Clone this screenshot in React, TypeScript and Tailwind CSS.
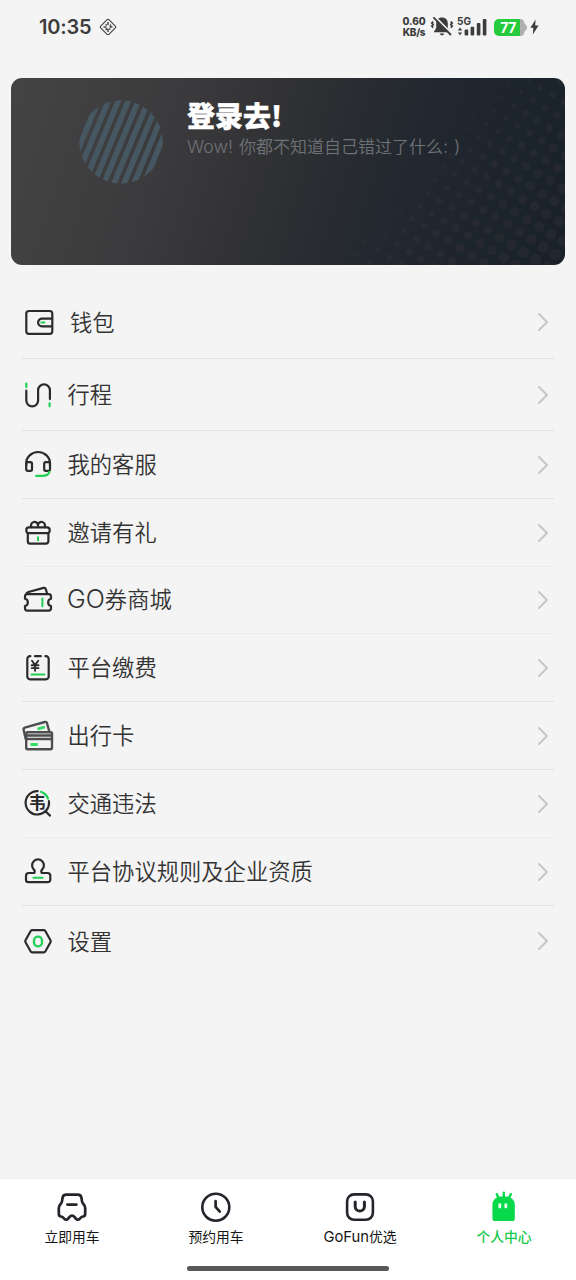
import React from 'react';
import { ChevronRight } from 'lucide-react';

const GREEN = '#1fd053';
const INK = '#2b2b2d';

const Icon: React.FC<{ children: React.ReactNode; stroke?: string; width?: number }> = ({
  children,
  stroke = INK,
  width = 2.2,
}) => (
  <svg
    viewBox="0 0 32 32"
    className="w-8 h-8 flex-shrink-0"
    fill="none"
    stroke={stroke}
    strokeWidth={width}
    strokeLinecap="round"
    strokeLinejoin="round"
  >
    {children}
  </svg>
);

const WalletIcon = () => (
  <Icon>
    <rect x="4.3" y="5" width="26" height="22.8" rx="2.6" />
    <path d="M30 12.6H20a3.9 3.9 0 0 0 0 7.8h10" />
    <path d="M19.3 16.5h3.2" stroke={GREEN} strokeWidth="1.8" />
  </Icon>
);

const RouteIcon = () => (
  <Icon>
    <path d="M4.3 11.5v10a5.9 5.9 0 0 0 11.8 0V11.3a5.9 5.9 0 0 1 11.8 0v8.800" />
    <path d="M4.3 4.6v3.4M27.6 24.3v3" stroke={GREEN} />
  </Icon>
);

const HeadsetIcon = () => (
  <Icon>
    <path d="M4.2 16.600v-2.200a11.900 11.400 0 0 1 23.800 0v2.200" />
    <rect x="4.2" y="13.2" width="5.8" height="8.6" rx="1.6" />
    <rect x="22.2" y="13.2" width="5.8" height="8.6" rx="1.6" />
    <path d="M27.4 22.800c-.6 2.6-3.600 4.100-7.400 4.100h-5.800" stroke={GREEN} />
  </Icon>
);

const GiftIcon = () => (
  <Icon>
    <path d="M9.400 10a3.500 3.500 0 1 1 6.600-1.600v1.800M22.600 10A3.500 3.500 0 1 0 16 8.400v1.800" />
    <rect x="4.300" y="10.300" width="23.400" height="5.900" rx="2.600" />
    <path d="M5.800 16.400v7.800a2.400 2.400 0 0 0 2.400 2.400H24a2.400 2.400 0 0 0 2.400-2.400v-7.800" />
    <path d="M16 20.200v3" stroke={GREEN} strokeWidth="2" />
  </Icon>
);

const TicketIcon = () => (
  <Icon>
    <path d="M5.300 10.200h21.400a2.400 2.400 0 0 1 2.300 2.400v2.200a3.700 3.700 0 0 0 0 7.200v2.200a2.400 2.400 0 0 1-2.300 2.400H5.300A2.400 2.400 0 0 1 3 24.200V22a3.700 3.700 0 0 0 0-7.200v-2.200a2.400 2.400 0 0 1 2.300-2.400Z" />
    <path d="M4.500 9.400l2-1.400L21.600 3.900a1.800 1.800 0 0 1 2.200 1.200l1.200 4.200" />
    <path d="M20.400 14.600v7.600" stroke={GREEN} strokeWidth="2" />
  </Icon>
);

const BillIcon = () => (
  <Icon>
    <path d="M8.400 4.200H8a2.700 2.700 0 0 0-2.700 2.700v17.700A2.700 2.700 0 0 0 8 27.300h16a2.700 2.700 0 0 0 2.700-2.700V6.900A2.700 2.700 0 0 0 24 4.200h-.600M13 4.200h5.800" />
    <path d="M10 8.800l3.100 4.300 3.100-4.300M13.100 13.100v5.700M9.700 13.200h6.800M9.700 16.100h6.800" strokeWidth="1.900" />
    <path d="M9.400 22.500h13" stroke={GREEN} strokeWidth="1.900" />
  </Icon>
);

const CardsIcon = () => (
  <Icon stroke="#4c4f4d" width={2.4}>
    <path d="M3.700 19L1.600 9.600a1.600 1.600 0 0 1 1.100-1.900L22.800 2a1.800 1.800 0 0 1 2.200 1.200l2.300 8.300" />
    <rect x="4.200" y="12.200" width="25.800" height="17" rx="1.400" />
    <path d="M4.200 15.500h25.800M4.200 19h25.800" strokeWidth="2.300" />
    <path d="M8.400 24.400h7.400M15.600 9.200l7.200-2.400" stroke="#35dc66" strokeWidth="3" strokeLinecap="butt" />
  </Icon>
);

const ViolationIcon = () => (
  <Icon>
    <path d="M15.600 3.100A11.700 11.700 0 1 0 26.900 13.100M24 23.700l4 3.900" />
    <path d="M19 3.800a12 12 0 0 1 7 6.800" stroke={GREEN} />
    <text
      x="15.200"
      y="20.800"
      textAnchor="middle"
      fontSize="17"
      fontWeight="700"
      fill={INK}
      stroke="none"
      fontFamily="'Noto Sans CJK SC', sans-serif"
    >
      韦
    </text>
  </Icon>
);

const StampIcon = () => (
  <Icon>
    <path d="M12.200 17c.900-1.300 .800-2.200-.300-3.400a5.900 5.900 0 1 1 8.200 0c-1.100 1.200-1.200 2.100-.3 3.400h5.800a2.700 2.700 0 0 1 2.700 2.700v4.100a2.400 2.400 0 0 1-2.400 2.400H6.400A2.400 2.400 0 0 1 4 23.800v-4.100A2.700 2.700 0 0 1 6.700 17Z" />
    <path d="M11.400 21.800h9.200" stroke={GREEN} strokeWidth="1.900" />
  </Icon>
);

const SettingsIcon = () => (
  <Icon>
    <path d="M10.200 5.200h11.600a1.800 1.800 0 0 1 1.500 .800l5.200 9.300a2 2 0 0 1 0 1.900l-5.200 9.300a1.800 1.800 0 0 1-1.500 .900H10.200a1.800 1.800 0 0 1-1.500-.900L3.500 17.200a2 2 0 0 1 0-1.900L8.700 6a1.800 1.800 0 0 1 1.500-.800Z" />
    <rect x="12" y="11.600" width="8" height="9.800" rx="3.900" stroke={GREEN} strokeWidth="2.300" />
  </Icon>
);

const menuItems = [
  { icon: WalletIcon, label: '钱包', row: 'h-[73px] border-[#e2e2e2]', text: 'ml-4' },
  { icon: RouteIcon, label: '行程', row: 'h-[72px] border-[#e2e2e2]', text: 'ml-[13.5px]' },
  { icon: HeadsetIcon, label: '我的客服', row: 'h-[68px] border-[#e2e2e2]', text: 'ml-[13.5px]' },
  { icon: GiftIcon, label: '邀请有礼', row: 'h-[68px] border-[#ededed]', text: 'ml-[13.5px]' },
  { icon: TicketIcon, latin: 'GO', label: '券商城', row: 'h-[67px] border-[#ededed]', text: 'ml-[13px]' },
  { icon: BillIcon, label: '平台缴费', row: 'h-[68px] border-[#e2e2e2]', text: 'ml-[13.5px]' },
  { icon: CardsIcon, label: '出行卡', row: 'h-[68px] border-[#e2e2e2]', text: 'ml-[13.5px]' },
  { icon: ViolationIcon, label: '交通违法', row: 'h-[68px] border-[#ededed]', text: 'ml-[13.5px]' },
  { icon: StampIcon, label: '平台协议规则及企业资质', row: 'h-[68px] border-[#e2e2e2]', text: 'ml-[13.5px]' },
  { icon: SettingsIcon, label: '设置', row: 'h-[71px] border-transparent', text: 'ml-[13.5px]' },
];

const CarTab = () => (
  <Icon width={2.7} stroke="#23252b">
    <path d="M10.400 3.700H21.600C23.800 3.700 25.200 5 25.500 7L26 10.400C26.200 11.600 26.600 12.200 27.400 13C28.600 14.300 29.200 15.400 29.200 17V23C29.200 24.600 28.400 25.300 26.900 25.500C25.600 25.700 25 26.200 24.200 27.300C23 29 21 29.200 19.800 27.600L18.400 25.800C17 24.200 15 24.200 13.600 25.800L12.200 27.600C11 29.200 9 29 7.800 27.300C7 26.200 6.400 25.700 5.100 25.500C3.600 25.300 2.800 24.600 2.800 23V17C2.800 15.400 3.400 14.300 4.600 13C5.400 12.200 5.800 11.600 6 10.400L6.500 7C6.800 5 8.200 3.700 10.400 3.700Z" />
    <path d="M11.400 13.600h9" />
  </Icon>
);

const ClockTab = () => (
  <Icon width={2.6} stroke="#23252b">
    <circle cx="15.800" cy="16.200" r="13.500" />
    <path d="M15.600 10.200v5.600l4.200 4.800" strokeWidth="2.700" />
  </Icon>
);

const ShopTab = () => (
  <Icon width={2.6} stroke="#23252b">
    <rect x="3.100" y="3.400" width="25.800" height="25.400" rx="7" />
    <path d="M11.200 11v4.400a4.600 4.600 0 0 0 9.200 0V11" strokeWidth="3" />
  </Icon>
);

const MeTab = () => (
  <Icon width={2} stroke="#07d94b">
    <path
      d="M4.400 13.600a8 8 0 0 1 8-8h6.400a8 8 0 0 1 8 8v13.800a2.600 2.600 0 0 1-2.600 2.600H7a2.600 2.600 0 0 1-2.600-2.600Z"
      fill="#07d94b"
      stroke="none"
    />
    <path d="M8.800 3.200l1.800 3.800M15.800 1.600V7M22.800 3.200l-1.800 3.800" strokeWidth="2.400" />
    <path d="M11.800 13.600v2.400M17.800 13.600v2.400" stroke="#eafff0" strokeWidth="2.800" />
  </Icon>
);

const tabs = [
  { icon: CarTab, label: '立即用车', active: false },
  { icon: ClockTab, label: '预约用车', active: false },
  { icon: ShopTab, latin: 'GoFun', label: '优选', active: false },
  { icon: MeTab, label: '个人中心', active: true },
];

// Halftone dots, growing towards the bottom right corner of the card
const dots: { x: number; y: number; r: number }[] = [];
for (let i = -30; i <= 30; i++) {
  for (let j = -30; j <= 30; j++) {
    const x = 499.7 - 7.7 * i + 12 * j;
    const y = 113.7 + 12.8 * i + 7.4 * j;
    const d = 3 * ((x - 289) * 0.72 + (y + 8) * 0.69) - 440;
    if (x < 0 || x > 562 || y < -6 || y > 194 || d <= 10) continue;
    dots.push({ x, y, r: 5.8 * Math.sqrt(Math.min(d / 460, 1)) });
  }
}

const CardArt = () => (
  <svg viewBox="0 0 554 187" className="absolute inset-0 w-full h-full">
    <g fill="#3a3638" fillOpacity="0.3">
      {dots.map((dot, i) => (
        <circle key={i} cx={dot.x} cy={dot.y} r={dot.r} />
      ))}
    </g>
  </svg>
);

const Avatar = () => (
  <svg viewBox="0 0 84 84" className="w-[84px] h-[84px] flex-shrink-0">
    <clipPath id="avatar">
      <circle cx="42" cy="42" r="41.8" />
    </clipPath>
    <g clipPath="url(#avatar)" stroke="#465761" strokeWidth="5.7">
      {[-5, -4, -3, -2, -1, 0, 1, 2, 3, 4, 5].map((n) => (
        <path key={n} d={`M${60.5 + n * 10} -2L${24 + n * 10} 86`} />
      ))}
    </g>
  </svg>
);

const StatusBar = () => (
  <div className="h-[54px] flex items-center pl-[39px] pr-9 text-[#3c3c3c] font-['Inter','Liberation_Sans',sans-serif]">
    <span className="text-[20px] leading-none font-semibold tracking-[-0.2px]">10:35</span>
    <svg viewBox="0 0 18 18" className="w-[18px] h-[18px] ml-2" fill="none" stroke="#4a4a4a" strokeWidth="1.2">
      <rect x="3.200" y="3.200" width="11.600" height="11.600" rx="1.600" transform="rotate(45 9 9)" />
      <path d="M9 4v3M9 11v3M4.500 9h3M10.500 9h3M6.500 6.500l1.500 1M11.500 6.500v2M6.500 11.500l2-1M11.500 11.500l-1.500-1" strokeWidth="1.500" />
    </svg>

    <div className="ml-auto flex items-center">
      <div className="w-6 text-[10px] leading-[11.5px] font-extrabold text-center whitespace-nowrap">
        <div className="tracking-[-0.1px]">0.60</div>
        <div className="tracking-[-0.3px]">KB/s</div>
      </div>
      <svg viewBox="0 0 24 22" className="w-6 h-[22px] ml-1" fill="none">
        <path d="M12 1.600c-3.800 0-5.800 2.600-5.800 5.800v4.600l-2.600 4.200h16.800l-2.600-4.200V7.400c0-3.200-2-5.800-5.800-5.800ZM9.800 17.600h4.400a2.200 1.800 0 0 1-4.400 0Z" fill="#3c3c3c" />
        <path d="M4.600 0.400l17.600 17.800" stroke="#f4f4f4" strokeWidth="2" />
        <path d="M3.400 1.400L21 19" stroke="#3c3c3c" strokeWidth="1.800" />
        <path d="M3.200 5.600l-1.400 1.500 1.400 1.500-1.400 1.500 1.400 1.500M20.800 5.600l1.400 1.500-1.400 1.500 1.400 1.500-1.400 1.500" stroke="#3c3c3c" strokeWidth="1.700" />
      </svg>
      <svg viewBox="0 -4 30 24" className="w-[30px] h-6 -mt-1 ml-[3px] overflow-visible" fill="#3c3c3c">
        <text
          x="0"
          y="8"
          fontSize="10.800"
          fontWeight="700"
          textLength="14"
          lengthAdjust="spacingAndGlyphs"
          fontFamily="Inter, sans-serif"
        >
          5G
        </text>
        <path d="M0.800 13.400l2.200-2.800 2.200 2.800ZM0.800 15.400h4.400l-2.200 2.800Z" />
        <rect x="7.600" y="12.600" width="3.600" height="6" rx="1" />
        <rect x="13.600" y="9.800" width="3.600" height="8.800" rx="1" />
        <rect x="19.800" y="6" width="3.600" height="12.600" rx="1" />
        <rect x="25.800" y="2" width="3.600" height="16.600" rx="1" />
      </svg>
      <div className="ml-[7px] flex items-center">
        <div className="w-[26px] h-[17px] rounded-l-[5px] bg-[#25cb3c] text-white text-[14px] tracking-[-0.5px] font-bold leading-[17px] text-center pl-0.5">
          77
        </div>
        <svg viewBox="0 0 7 17" className="w-[7px] h-[17px]">
          <path d="M0 0h.500c2 0 3 .800 3.500 2.500l.800 2.500C6.500 6 7 7 7 8.500S6.500 11 4.800 12L4 14.500C3.500 16.200 2.500 17 .500 17H0Z" fill="#aeb0ae" />
        </svg>
      </div>
      <svg viewBox="0 0 9 16" className="w-[9px] h-4 ml-[3px] mr-px" fill="#3c3c3c">
        <path d="M5.600 0.600L0.400 8.800h3L2.800 15.400 8.600 6.600H5.200Z" />
      </svg>
    </div>
  </div>
);

export default function App() {
  return (
    <div className="w-[576px] h-[1280px] flex flex-col bg-[#f4f4f4] overflow-hidden font-['Noto_Sans_CJK_SC',sans-serif]">
      <StatusBar />

      {/* Login card */}
      <div className="relative mt-6 mx-[11px] h-[187px] flex-shrink-0 rounded-[11px] overflow-hidden bg-[linear-gradient(108deg,#454445_0%,#3b3a3c_28%,#333336_43%,#2a2d31_55%,#222830_70%,#1b232c_88%,#18212a_100%)]">
        <CardArt />
        <div className="relative flex items-start pt-[22px] pl-[68px]">
          <Avatar />
          <div className="ml-6 -mt-px">
            <h1 className="text-[28px] leading-8 font-black text-white [-webkit-text-stroke:0.4px_white]">登录去!</h1>
            <p className="-mt-px text-[17px] leading-8 font-[350] text-[#6f7276] whitespace-nowrap font-['Noto_Sans_CJK_SC',sans-serif]">
              <span className="text-[17.8px] font-light font-['Inter'] mr-px">Wow! </span>
              你都不知道自己错过了什么
              <span className="text-[18px] font-light font-['Inter'] tracking-[0.4px]">: )</span>
            </p>
          </div>
        </div>
      </div>

      {/* Menu */}
      <ul className="mt-[21px] mx-[22px]">
        {menuItems.map((item) => (
          <li key={item.label} className={`flex items-center border-b ${item.row}`}>
            <item.icon />
            <span className={`-mt-[3px] text-[22.3px] leading-8 font-[350] text-[#333] whitespace-nowrap ${item.text}`}>
              {item.latin && <span className="text-[25.2px] font-light font-['Inter']">{item.latin}</span>}
              {item.label}
            </span>
            <ChevronRight className="ml-auto -mr-[5px] w-8 h-8 text-[#c6c6c6]" strokeWidth={1.5} />
          </li>
        ))}
      </ul>

      {/* Tab bar */}
      <nav className="mt-auto h-[102px] flex flex-col items-center bg-white border-t border-[#ededed]">
        <div className="w-full grid grid-cols-4 pt-3">
          {tabs.map((tab) => (
            <div key={tab.label} className="flex flex-col items-center">
              <tab.icon />
              <span
                className={`mt-[3px] text-[13.8px] leading-5 whitespace-nowrap ${
                  tab.active ? 'text-[#16c94c] font-medium' : 'text-[#151515]'
                }`}
              >
                {tab.latin && <span className="text-[14.8px] font-['Inter']">{tab.latin}</span>}
                {tab.label}
              </span>
            </div>
          ))}
        </div>
        <div className="mt-auto mb-[9px] w-[202px] h-[5px] rounded-full bg-[#575757]" />
      </nav>
    </div>
  );
}
